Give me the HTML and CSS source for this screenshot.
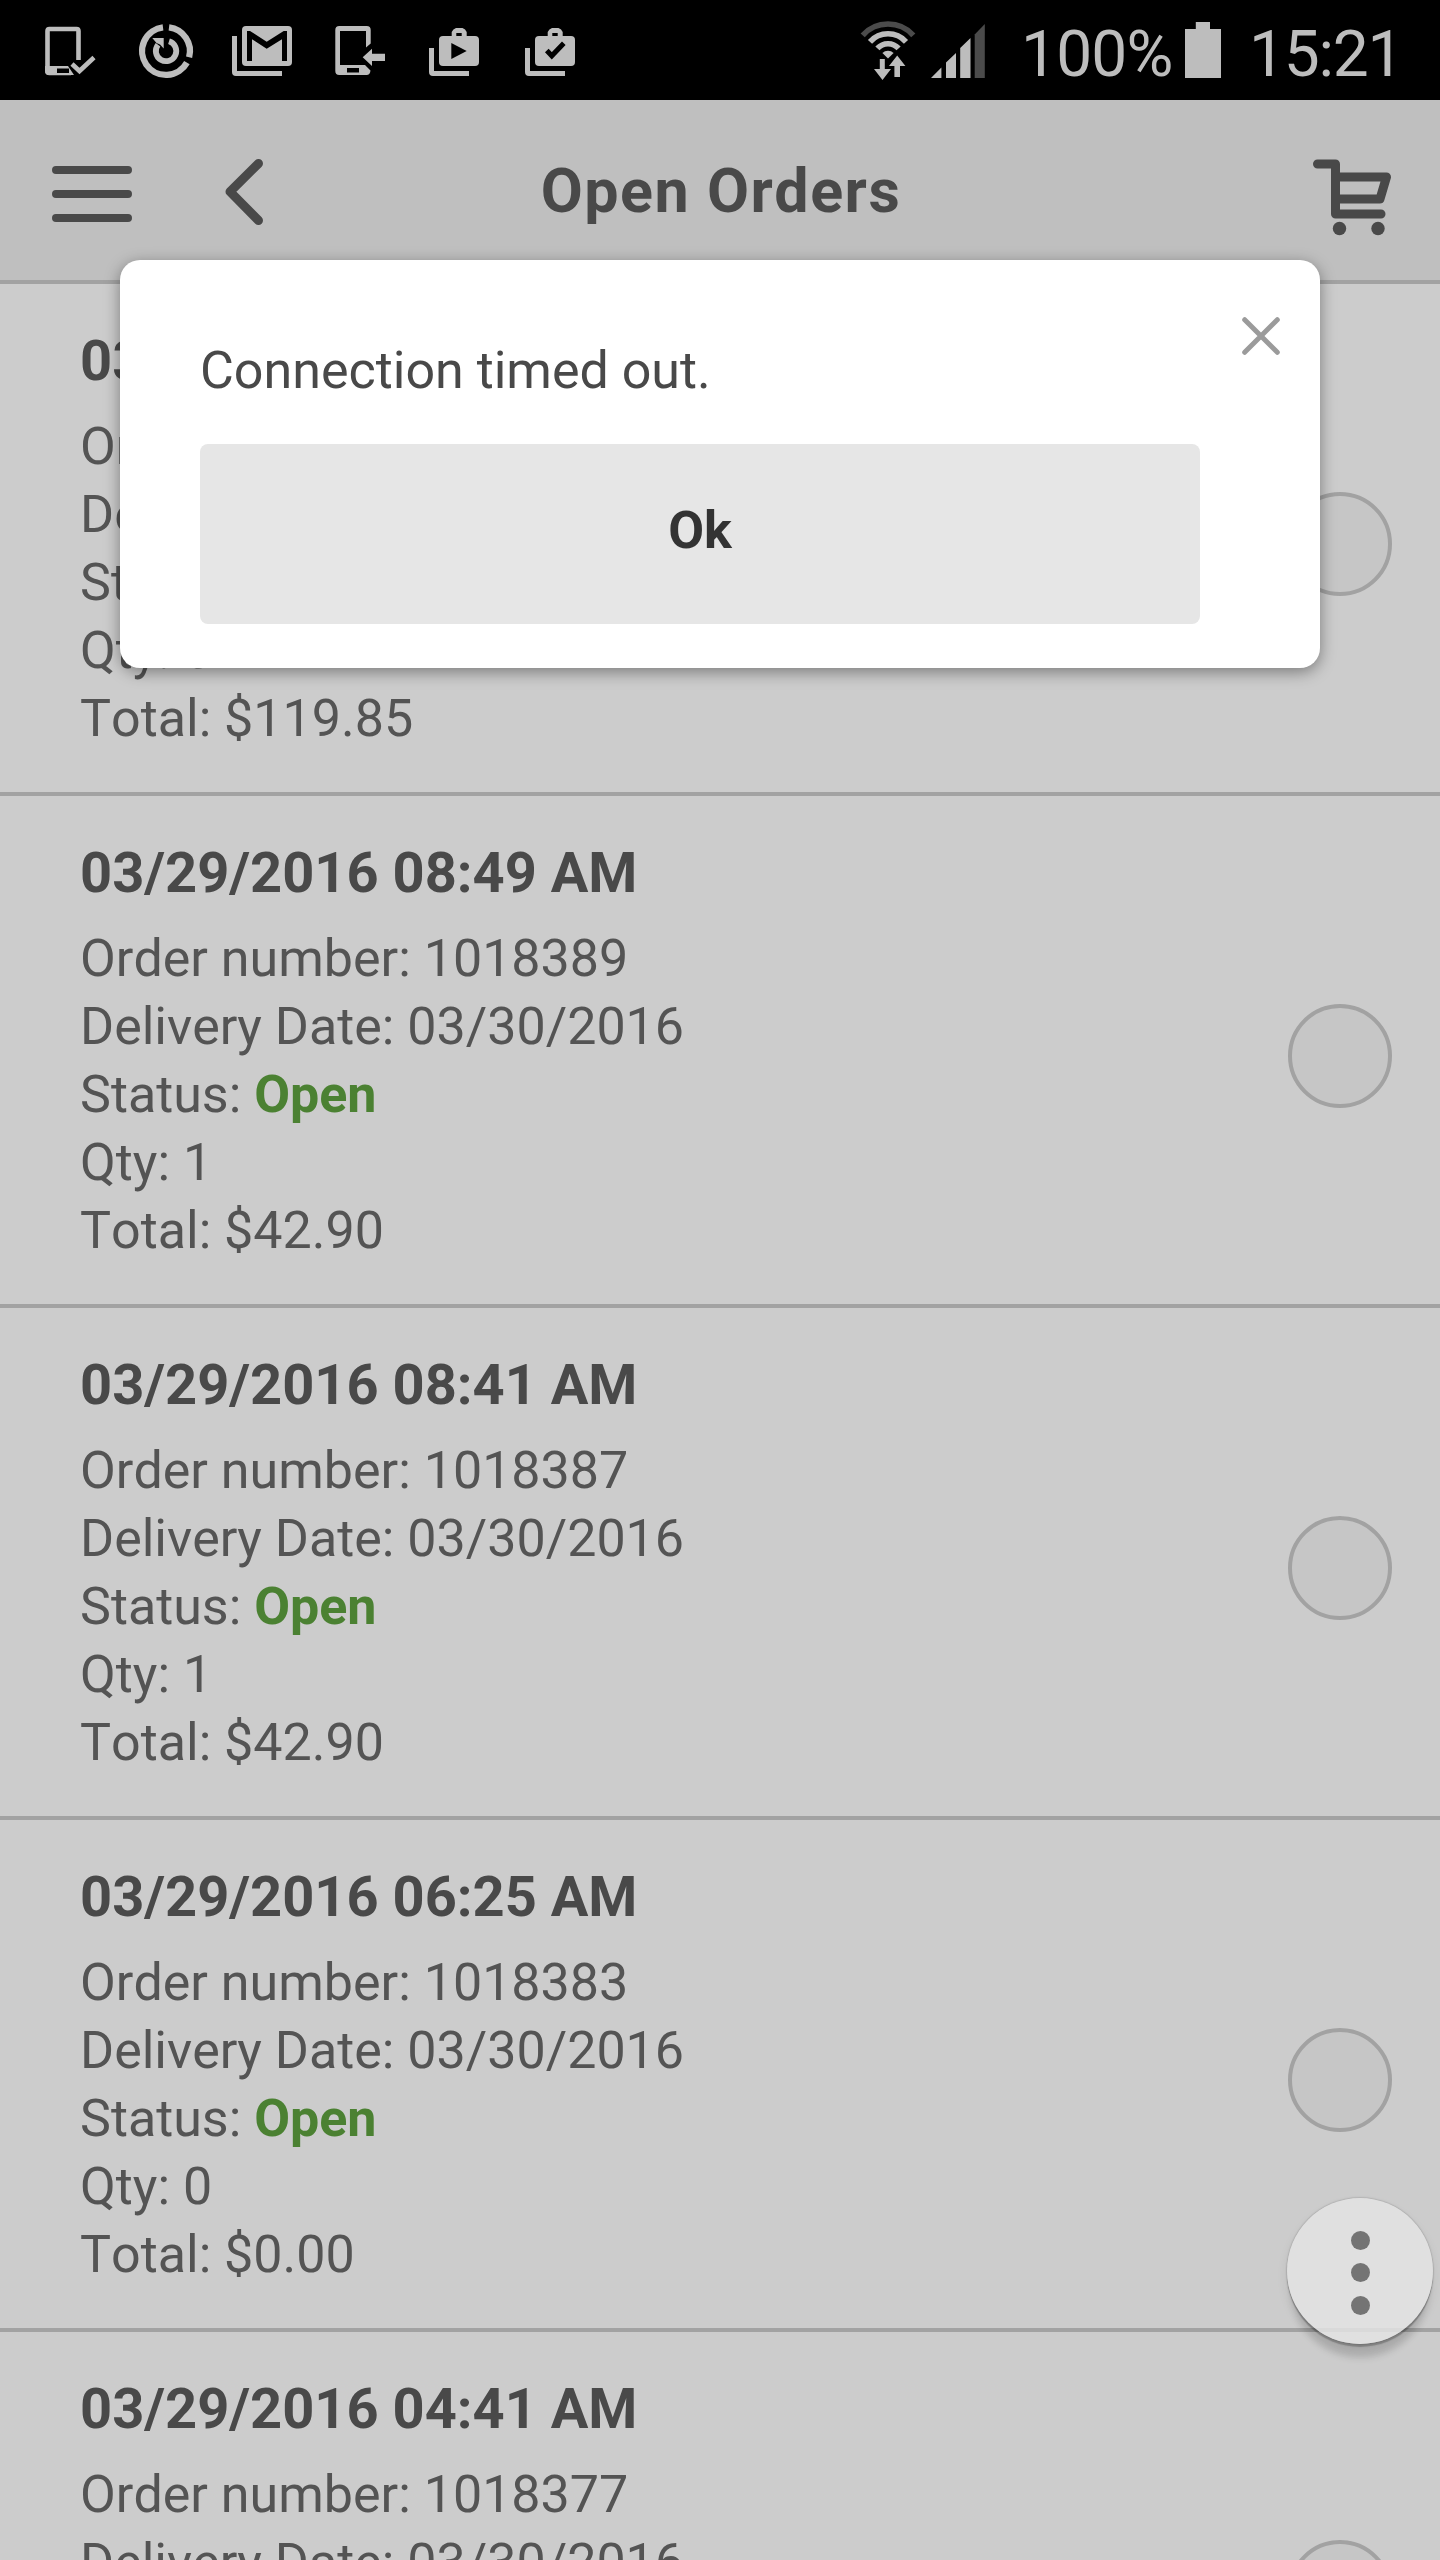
FILE: index.html
```html
<!DOCTYPE html>
<html lang="en">
<head>
<meta charset="utf-8">
<title>Open Orders</title>
<link rel="stylesheet" href="styles.css">
</head>
<body>
<div class="screen">
  <div class="status-bar">
    <div class="notifications">
      <svg class="note" viewBox="0 0 96 100"><path class="line" stroke-width="4.6" d="M56.5 60V31Q56.5 29 54.5 29H27.5Q25.5 29 25.5 31V71Q25.5 73 27.5 73H49"/><path d="M25 66H46L52 75H27Q23 75 23 71V66z"/><path class="hole" d="M35 68.5H47V73H35z"/><path class="line" stroke-width="4.6" d="M50 64L57.5 71L72 57.5"/></svg>
      <svg class="note" viewBox="0 0 96 100"><path class="line" stroke-width="6.3" d="M51 27.3A23.9 23.9 0 0 1 71.1 57.2M68.9 62.6A23.9 23.9 0 1 1 45 27.3"/><path class="line" stroke-width="5.8" d="M51 41.2A10.2 10.2 0 1 1 40 44.7"/><path d="M34.3 38H45.7V48.5L42 44.5L38.5 43z"/></svg>
      <svg class="note" viewBox="0 0 96 100"><rect x="28" y="26" width="50" height="40" rx="4"/><path class="hole" d="M33 31H36L52.7 41.7L69.7 31H73V61H68V39.3L52.7 48.7L38 39.3V61H33z"/><path d="M18 36H23V71H68V76H22Q18 76 18 72z"/></svg>
      <svg class="note" viewBox="0 0 96 100"><path fill-rule="evenodd" d="M29.3 26H56.7Q60.7 26 60.7 30V43.5L56 47.5V31H30V65H55L60.5 70.5Q60 75 56.5 75H29.3Q25.3 75 25.3 71V30Q25.3 26 29.3 26zM37 68V72.5H49V68z"/><path d="M52.7 57.3L62 48.7V53.7H75V61H62V66z"/></svg>
      <svg class="note" viewBox="0 0 96 100"><rect x="33" y="36" width="40" height="30" rx="4"/><path d="M45.7 37V32Q47 29 50 28H56.5Q59.5 29 60.7 32V37H55.7V33H50.3V37z"/><path class="hole" d="M45.3 43L60.7 51L45.3 59z"/><path d="M23 48H28V71H63V76H27Q23 76 23 72z"/></svg>
      <svg class="note" viewBox="0 0 96 100"><rect x="33" y="36" width="40" height="30" rx="4"/><path d="M45.7 37V32Q47 29 50 28H56.5Q59.5 29 60.7 32V37H55.7V33H50.3V37z"/><path class="cut" d="M44.8 50.5L49.8 55.8L61.8 43.3"/><path d="M23 48H28V71H63V76H27Q23 76 23 72z"/></svg>
    </div>
    <div class="system">
      <svg class="wifi" viewBox="0 0 70 100"><path class="line off" stroke-width="5.6" d="M9.7 35.3A34 34 0 0 1 60.3 35.3"/><path class="line" stroke-width="5.6" d="M17 41.8A24.2 24.2 0 0 1 53 41.8M24.4 48.4A14.3 14.3 0 0 1 45.6 48.4"/><path d="M35 58.5L29.4 53A8 8 0 0 1 40.6 53z"/><path d="M26.8 59H31.8V69H38L29.5 80L21 69H26.8zM41.4 77V66H36L44.2 55.5L52.4 66H47V77z"/></svg>
      <svg class="signal" viewBox="0 0 54 100"><path d="M0 78L10.4 67.5V78zM15 78V62.5L25 53V78zM29.2 78V48L39.5 38V78z"/><path class="bar-off" d="M43.7 78V34.5L53.8 24V78z"/></svg>
      <span class="charge">100%</span>
      <svg class="battery" viewBox="0 0 36 100"><path d="M0 29H10.8V22H25V29H36V78H0z"/></svg>
      <span class="clock">15:21</span>
    </div>
  </div>

  <header class="app-bar">
    <svg class="menu" viewBox="0 0 80 56"><path d="M4 4H76M4 28H76M4 52H76"/></svg>
    <svg class="back" viewBox="0 0 38 66"><path d="M33.5 4.5L5 32.7L33.5 61.5"/></svg>
    <h1 class="title">Open Orders</h1>
    <svg class="cart" viewBox="0 0 80 78"><path d="M5.5 6H23.5V56H69M23.5 19H74.5L68 41H23.5"/><circle cx="27.5" cy="70.5" r="6.7"/><circle cx="66" cy="70.5" r="6.7"/></svg>
  </header>

  <main class="orders">
    <section class="order">
      <div class="info">
        <h2>03/29/2016 08:52 AM</h2>
        <p>Order number: 1018391</p><p>Delivery Date: 03/30/2016</p><p>Status: <b>Open</b></p><p>Qty: 5</p><p>Total: $119.85</p>
      </div>
      <span class="radio"></span>
    </section>
    <section class="order">
      <div class="info">
        <h2>03/29/2016 08:49 AM</h2>
        <p>Order number: 1018389</p><p>Delivery Date: 03/30/2016</p><p>Status: <b>Open</b></p><p>Qty: 1</p><p>Total: $42.90</p>
      </div>
      <span class="radio"></span>
    </section>
    <section class="order">
      <div class="info">
        <h2>03/29/2016 08:41 AM</h2>
        <p>Order number: 1018387</p><p>Delivery Date: 03/30/2016</p><p>Status: <b>Open</b></p><p>Qty: 1</p><p>Total: $42.90</p>
      </div>
      <span class="radio"></span>
    </section>
    <section class="order">
      <div class="info">
        <h2>03/29/2016 06:25 AM</h2>
        <p>Order number: 1018383</p><p>Delivery Date: 03/30/2016</p><p>Status: <b>Open</b></p><p>Qty: 0</p><p>Total: $0.00</p>
      </div>
      <span class="radio"></span>
    </section>
    <section class="order">
      <div class="info">
        <h2>03/29/2016 04:41 AM</h2>
        <p>Order number: 1018377</p><p>Delivery Date: 03/30/2016</p>
      </div>
      <span class="radio"></span>
    </section>
  </main>

  <div class="fab"><i></i><i></i><i></i></div>

  <div class="dialog">
    <p class="message">Connection timed out.</p>
    <button class="ok">Ok</button>
    <svg class="close" viewBox="0 0 38 38"><path d="M2.7 2.7L35.3 35.3M35.3 2.7L2.7 35.3"/></svg>
  </div>
</div>
</body>
</html>
```
FILE: styles.css
```css
* { box-sizing: border-box; margin: 0; padding: 0; }
body { font-family: Roboto, sans-serif; font-kerning: none; background: #ccc; }
svg { display: block; flex: none; }

.screen {
  position: relative;
  width: 1440px;
  height: 2560px;
  overflow: hidden;
  background: #ccc;
}

/* system status bar */
.status-bar {
  display: flex;
  justify-content: space-between;
  height: 100px;
  padding-left: 22px;
  background: #000;
  color: #bdbdbd;
  fill: #bdbdbd;
}
.notifications, .system { display: flex; }
.system { width: 587px; }
.note { width: 96px; height: 100px; }
.line { fill: none; stroke: #bdbdbd; }
.off { stroke: #4b4b4b; }
.bar-off { fill: #4b4b4b; }
.hole { fill: #000; }
.cut { fill: none; stroke: #000; stroke-width: 5; }
.wifi { width: 70px; height: 100px; margin-right: 8px; }
.signal { width: 54px; height: 100px; }
.battery { width: 36px; height: 100px; }
.charge, .clock { font-size: 64px; line-height: 110px; height: 100px; white-space: nowrap; }
.charge { width: 200px; padding-left: 36px; letter-spacing: -0.8px; }
.clock { padding-left: 28px; letter-spacing: -1.2px; }

/* application bar */
.app-bar {
  display: flex;
  align-items: flex-start;
  height: 184px;
  padding: 0 48px 0 52px;
  background: #bfbfbf;
  border-bottom: 4px solid #a2a2a2;
}
.app-bar path { fill: none; stroke: #494949; stroke-linecap: round; stroke-linejoin: round; }
.menu { width: 80px; height: 56px; margin-top: 66px; }
.menu path { stroke-width: 8; }
.back { width: 38px; height: 66px; margin: 59px 0 0 93px; }
.back path { stroke-width: 9; }
.title {
  flex: 1;
  padding-right: 1px;
  margin-right: 132px;
  line-height: 182px;
  font-size: 61px;
  letter-spacing: 1.5px;
  text-align: center;
  color: #494949;
}
.cart { width: 80px; height: 78px; margin-top: 57.5px; fill: #494949; }
.cart path { stroke-width: 9; }

/* order list */
.order {
  display: flex;
  align-items: center;
  justify-content: space-between;
  height: 512px;
  padding: 0 48px 0 80px;
  border-bottom: 4px solid #a2a2a2;
}
.order .info { align-self: flex-start; padding-top: 40px; }
.order h2 {
  margin-bottom: 15px;
  font-size: 56px;
  line-height: 74px;
  color: #494949;
}
.order p { font-size: 52px; line-height: 68px; color: #545454; }
.order b { color: #4b8132; }
.radio {
  width: 104px;
  height: 104px;
  margin-top: 12px;
  border: 4px solid #a2a2a2;
  border-radius: 50%;
  background: #c6c6c6;
}

/* floating action button */
.fab {
  position: absolute;
  left: 1287px;
  top: 2197.5px;
  display: flex;
  flex-direction: column;
  align-items: center;
  gap: 13.5px;
  width: 146px;
  height: 146px;
  padding-top: 33px;
  border-radius: 50%;
  background: rgba(227, 227, 227, 0.85);
  box-shadow: 0 0 2px rgba(0, 0, 0, 0.35), 0 3px 1px rgba(0, 0, 0, 0.22), 0 19px 7px -5px rgba(0, 0, 0, 0.13), 0 6px 12px rgba(0, 0, 0, 0.08);
}
.fab i { width: 19px; height: 19px; border-radius: 50%; background: #747474; }

/* alert dialog */
.dialog {
  position: absolute;
  left: 120px;
  top: 260px;
  width: 1200px;
  height: 408px;
  padding: 77px 120px 44px 80px;
  border-radius: 20px;
  background: #fff;
  box-shadow: 0 4px 16px rgba(0, 0, 0, 0.4);
}
.message { font-size: 52px; line-height: 68px; color: #494949; }
.ok {
  display: block;
  width: 1000px;
  height: 180px;
  margin-top: 39px;
  padding-bottom: 6px;
  border: 0;
  border-radius: 8px;
  background: #e6e6e6;
  font: bold 52px/68px Roboto, sans-serif;
  font-kerning: none;
  color: #333;
}
.close { position: absolute; right: 40px; top: 56.5px; width: 38px; height: 38px; }
.close path { stroke: #9b9b9b; stroke-width: 5; stroke-linecap: round; }
```
